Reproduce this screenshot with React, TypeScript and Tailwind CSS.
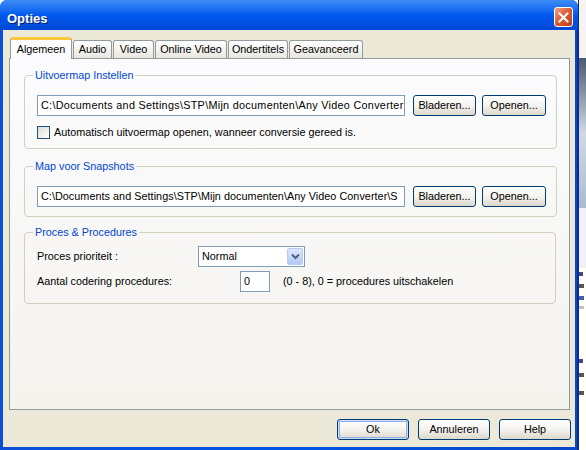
import React from "react";

const font = "font-['Liberation_Sans',Arial,sans-serif]";

const tabs = [
  { label: "Algemeen", w: "w-[62px]", active: true },
  { label: "Audio", w: "w-[39px]" },
  { label: "Video", w: "w-[41px]" },
  { label: "Online Video", w: "w-[72px]" },
  { label: "Ondertitels", w: "w-[60px]" },
  { label: "Geavanceerd", w: "w-[74px]" },
];

function XpButton({ label, w, isDefault }: { label: string; w: string; isDefault?: boolean }) {
  return (
    <button
      className={`${w} h-[21px] rounded-[3px] border border-[#003C74] bg-gradient-to-b from-white via-[#F4F3EE] to-[#DCD8CC] text-[10.8px] leading-none text-black ${
        isDefault ? "shadow-[inset_0_0_0_1px_#CEDCF5,inset_0_0_0_2px_#8FB0E8]" : ""
      }`}
    >
      {label}
    </button>
  );
}

function TextBox({ value, w, tracking = "" }: { value: string; w: string; tracking?: string }) {
  return (
    <div className={`${w} h-[21px] shrink-0 border border-[#7F9DB9] bg-white pl-[3px] flex items-center overflow-hidden whitespace-nowrap ${tracking}`}>
      {value}
    </div>
  );
}

function Group({ title, className, children }: { title: string; className: string; children: React.ReactNode }) {
  return (
    <fieldset className={`border border-[#D0D0BF] rounded-[4px] pl-[12px] pr-[10px] ${className}`}>
      <legend className="-ml-[4px] px-[2px] leading-[14px] text-[#0046D5]">{title}</legend>
      {children}
    </fieldset>
  );
}

export default function App() {
  return (
    <div className={`flex w-[586px] h-[450px] overflow-hidden bg-white ${font} text-[10.8px] text-black`}>
      {/* dialog window */}
      <div className="w-[578px] h-[450px] flex flex-col rounded-t-[7px] bg-gradient-to-r from-[#0A4FD8] via-[#0055E5] to-[#0A46C8] shadow-[inset_-1px_0_0_#002E9E]">
        {/* title bar */}
        <div className="h-[30px] shrink-0 flex items-start justify-between pl-[7px] pr-[5px] rounded-t-[7px] bg-gradient-to-b from-[#3D8EF7] via-[#0058EE] to-[#0048D6]">
          <span className="mt-[12px] text-white font-bold text-[13px] leading-none [text-shadow:1px_1px_0_#0A1E6A]">Opties</span>
          <div className="w-[19px] h-[20px] mt-[7px] rounded-[3px] border border-white bg-gradient-to-br from-[#F0A080] via-[#DA5A32] to-[#C23C1A] flex items-center justify-center">
            <svg width="11" height="11" viewBox="0 0 11 11">
              <path d="M1.5 1.5 L9.5 9.5 M9.5 1.5 L1.5 9.5" stroke="white" strokeWidth="2" strokeLinecap="square" />
            </svg>
          </div>
        </div>

        {/* body */}
        <div className="flex-1 mx-[3px] mb-[3px] bg-[#ECE9D8] flex flex-col pt-[6px] pl-[6px] pr-[5px]">
          {/* tabs */}
          <div className="h-[22px] flex items-end pl-[1px] gap-[1px]">
            {tabs.map((t) =>
              t.active ? (
                <div
                  key={t.label}
                  className={`${t.w} h-[22px] -mb-[1px] relative z-10 rounded-t-[3px] border-x border-[#919B9C] border-t-[3px] border-t-[#FFC83C] bg-[#FCFCFE] flex items-center justify-center pb-[1px]`}
                >
                  {t.label}
                </div>
              ) : (
                <div
                  key={t.label}
                  className={`${t.w} h-[18px] rounded-t-[3px] border-x border-t border-[#919B9C] bg-gradient-to-b from-white to-[#E8E7E0] flex items-center justify-center`}
                >
                  {t.label}
                </div>
              )
            )}
          </div>

          {/* tab panel */}
          <div className="h-[352px] border border-[#919B9C] bg-gradient-to-b from-[#FCFCFE] to-[#F4F3EE] flex flex-col pl-[14px] pr-[13px]">
            <Group title="Uitvoermap Instellen" className="mt-[9px] pt-[13px] pb-[9px]">
              <div className="flex items-center">
                <TextBox value="C:\Documents and Settings\STP\Mijn documenten\Any Video Converter" w="w-[368px]" tracking="tracking-[0.3px]" />
                <div className="ml-[8px] flex gap-[6px]">
                  <XpButton label="Bladeren..." w="w-[63px]" />
                  <XpButton label="Openen..." w="w-[64px]" />
                </div>
              </div>
              <div className="mt-[10px] flex items-center gap-[4px] h-[13px]">
                <div className="w-[13px] h-[13px] border border-[#1C5180] bg-gradient-to-br from-[#DCDCD7] to-white" />
                <span>Automatisch uitvoermap openen, wanneer conversie gereed is.</span>
              </div>
            </Group>

            <Group title="Map voor Snapshots" className="mt-[10px] pt-[13px] pb-[9px]">
              <div className="flex items-center">
                <TextBox value="C:\Documents and Settings\STP\Mijn documenten\Any Video Converter\S" w="w-[368px]" tracking="tracking-[0.05px]" />
                <div className="ml-[8px] flex gap-[6px]">
                  <XpButton label="Bladeren..." w="w-[63px]" />
                  <XpButton label="Openen..." w="w-[64px]" />
                </div>
              </div>
            </Group>

            <Group title="Proces & Procedures" className="mt-[8px] pt-[7px] pb-[11px]">
              <div className="flex items-center h-[21px]">
                <span className="w-[161px]">Proces prioriteit :</span>
                <div className="w-[107px] h-[21px] border border-[#7F9DB9] bg-white flex items-center justify-between pl-[3px] pr-[1px]">
                  <span>Normal</span>
                  <div className="w-[16px] h-[17px] rounded-[2px] border border-[#B9CBF3] bg-gradient-to-b from-[#DCE6FD] to-[#B4C8F6] flex items-center justify-center">
                    <svg width="9" height="7" viewBox="0 0 9 7">
                      <path d="M1 1.5 L4.5 5 L8 1.5" stroke="#4D6185" strokeWidth="2" fill="none" />
                    </svg>
                  </div>
                </div>
              </div>
              <div className="mt-[4px] flex items-center h-[21px]">
                <span className="w-[203px]">Aantal codering procedures:</span>
                <TextBox value="0" w="w-[30px]" />
                <span className="ml-[13px]">(0 - 8), 0 = procedures uitschakelen</span>
              </div>
            </Group>
          </div>

          {/* dialog buttons */}
          <div className="mt-[9px] flex justify-end gap-[9px] -mr-[1px]">
            <XpButton label="Ok" w="w-[72px]" isDefault />
            <XpButton label="Annuleren" w="w-[72px]" />
            <XpButton label="Help" w="w-[72px]" />
          </div>
        </div>
      </div>

      {/* background behind the dialog */}
      <div className="w-[8px] h-[450px] flex flex-col bg-white border-l border-[#1A2A6A]">
        <div className="h-[58px] bg-[#F4F4F2]" />
        <div className="h-[150px] bg-gradient-to-b from-[#4A5A74] via-[#D0DAE6] to-[#A8BCD4]" />
        <div className="h-[60px] bg-[#EEF2F8]" />
        <div className="mt-[4px] h-[4px] w-[4px] bg-[#3A4A8A]" />
        <div className="mt-[8px] h-[4px] w-[5px] bg-[#555]" />
        <div className="mt-[8px] h-[4px] w-[5px] bg-[#4060A8]" />
        <div className="mt-[6px] h-[3px] w-[5px] bg-[#C0C0C0]" />
        <div className="mt-[50px] h-[4px] w-[4px] bg-[#3A4A9A]" />
        <div className="mt-[10px] h-[4px] w-[5px] bg-[#555]" />
        <div className="mt-[14px] h-[4px] w-[5px] bg-[#555]" />
      </div>
    </div>
  );
}
